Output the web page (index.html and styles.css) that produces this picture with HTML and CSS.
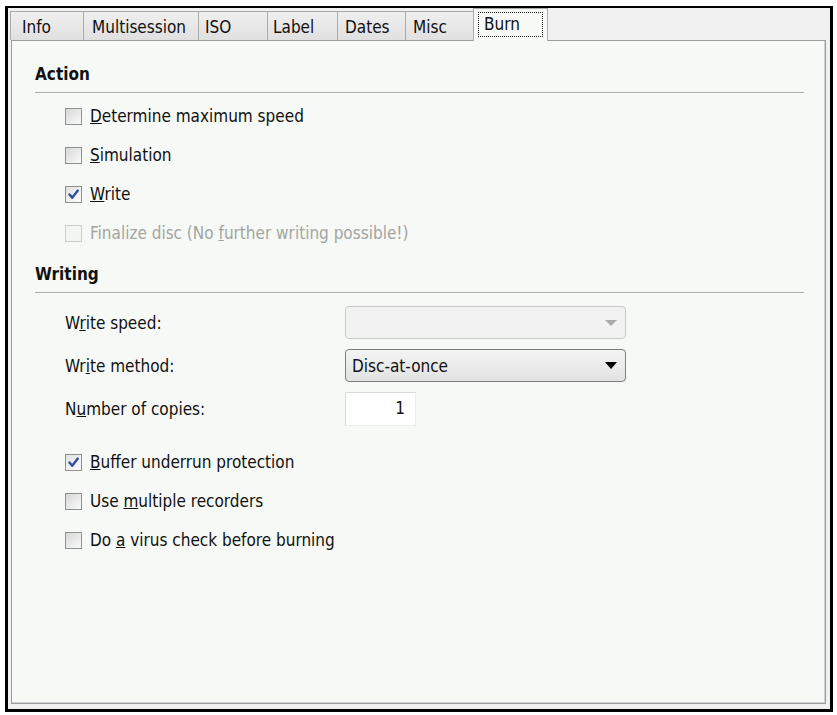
FILE: index.html
```html
<!DOCTYPE html>
<html>
<head>
<meta charset="utf-8">
<link rel="stylesheet" href="styles.css">
</head>
<body>
<div class="window">
  <div class="tabs">
    <div class="tab tab-info">Info</div>
    <div class="tab tab-multi">Multisession</div>
    <div class="tab tab-iso">ISO</div>
    <div class="tab tab-label">Label</div>
    <div class="tab tab-dates">Dates</div>
    <div class="tab tab-misc">Misc</div>
    <div class="tab tab-active"><span class="focus">Burn</span></div>
  </div>
  <div class="panel">
    <section class="group">
      <h2 class="group-title">Action</h2>
      <div class="rule"></div>
      <div class="checks checks-action">
        <div class="check"><span class="box"></span><span><u>D</u>etermine maximum speed</span></div>
        <div class="check"><span class="box"></span><span><u>S</u>imulation</span></div>
        <div class="check"><span class="box box-checked"><svg viewBox="0 0 17 17" width="17" height="17"><path d="M4.5 8.5 L7.2 11.8 L12.8 4.6" fill="none" stroke="#2f4f9e" stroke-width="2.4" stroke-linecap="round" stroke-linejoin="round"/></svg></span><span><u>W</u>rite</span></div>
        <div class="check check-disabled"><span class="box box-disabled"></span><span>Finalize disc (No <u>f</u>urther writing possible!)</span></div>
      </div>
    </section>
    <section class="group group-writing">
      <h2 class="group-title">Writing</h2>
      <div class="rule"></div>
      <div class="fields">
        <div class="field">
          <span class="field-label">W<u>r</u>ite speed:</span>
          <div class="combo combo-disabled"><span class="combo-text"></span><span class="arrow arrow-disabled"></span></div>
        </div>
        <div class="field">
          <span class="field-label">Wr<u>i</u>te method:</span>
          <div class="combo"><span class="combo-text">Disc-at-once</span><span class="arrow"></span></div>
        </div>
        <div class="field field-num">
          <span class="field-label">N<u>u</u>mber of copies:</span>
          <div class="numbox">1</div>
        </div>
      </div>
      <div class="checks checks-writing">
        <div class="check"><span class="box box-checked"><svg viewBox="0 0 17 17" width="17" height="17"><path d="M4.5 8.5 L7.2 11.8 L12.8 4.6" fill="none" stroke="#2f4f9e" stroke-width="2.4" stroke-linecap="round" stroke-linejoin="round"/></svg></span><span><u>B</u>uffer underrun protection</span></div>
        <div class="check"><span class="box"></span><span>Use <u>m</u>ultiple recorders</span></div>
        <div class="check"><span class="box"></span><span>Do <u>a</u> virus check before burning</span></div>
      </div>
    </section>
  </div>
</div>
</body>
</html>
```

FILE: styles.css
```css
html, body {
  margin: 0;
  padding: 0;
  background: #ffffff;
}

body {
  font-family: "DejaVu Sans Condensed", "DejaVu Sans", sans-serif;
  font-size: 17px;
  color: #111111;
}

.window {
  box-sizing: border-box;
  width: 828px;
  height: 706px;
  margin: 6px 0 0 5px;
  border: 3px solid #000000;
  border-top-width: 2px;
  background: #f0f0f0;
  padding: 0 4px 5px 3px;
  display: flex;
  flex-direction: column;
}

.tabs {
  height: 32px;
  display: flex;
  align-items: flex-end;
  margin-left: -1px;
  position: relative;
  z-index: 1;
}

.tab {
  box-sizing: border-box;
  height: 29px;
  padding-left: 8px;
  padding-top: 2px;
  line-height: 27px;
  border: 1px solid #a9acab;
  border-left: none;
  border-bottom: none;
  background: linear-gradient(#efefef, #e0e0e0);
  white-space: nowrap;
}

.tab-info { width: 74px; border-left: 1px solid #a9acab; padding-left: 11px; }
.tab-multi { width: 115px; }
.tab-iso { width: 69px; padding-left: 6px; }
.tab-label { width: 70px; padding-left: 5px; }
.tab-dates { width: 68px; padding-left: 7px; }
.tab-misc { width: 67px; padding-left: 7px; border-right: none; }

.tab-active {
  width: 75px;
  height: 33px;
  margin-bottom: -1px;
  border: 1px solid #a9acab;
  border-bottom: none;
  background: #f6f9f6;
  padding: 3px 4px 0 4px;
  line-height: normal;
}

.focus {
  display: block;
  box-sizing: border-box;
  height: 25px;
  border: 1px dotted #222222;
  padding-left: 5px;
  line-height: 22px;
}

.panel {
  flex: 1;
  box-sizing: border-box;
  border: 1px solid #9a9e9e;
  box-shadow: inset -1px -1px 0 #cdd0d0;
  background: #f6f9f6;
  padding: 23px 21px 0 23px;
}

.group-title {
  margin: 0;
  height: 20px;
  line-height: 20px;
  font-size: 17px;
  font-weight: bold;
  color: #111111;
}

.rule {
  margin-top: 8px;
  border-top: 1px solid #a8aca8;
  border-bottom: 1px solid #ffffff;
}

.group-writing {
  margin-top: 19px;
}

.checks {
  display: flex;
  flex-direction: column;
  gap: 15px;
  padding-left: 30px;
}

.checks-action { margin-top: 10px; }
.checks-writing { margin-top: 24px; }

.check {
  display: flex;
  align-items: center;
  gap: 8px;
  height: 24px;
  white-space: nowrap;
}

.check-disabled {
  color: #a3a5a3;
}

.box {
  box-sizing: border-box;
  width: 17px;
  height: 17px;
  border: 1px solid #8f9191;
  background: linear-gradient(135deg, #d6d7d7 0%, #ececec 60%, #fafafa 100%);
  display: flex;
  align-items: center;
  justify-content: center;
}

.box svg {
  display: block;
  margin: -1px;
}

.box-checked {
  background: linear-gradient(135deg, #dfe0e0 0%, #f2f2f2 60%, #fbfbfb 100%);
}

.box-disabled {
  border-color: #cbcdcd;
  background: #f3f5f3;
}

.fields {
  margin-top: 12px;
  padding-left: 30px;
  display: flex;
  flex-direction: column;
  gap: 10px;
}

.field {
  display: flex;
  align-items: center;
  height: 33px;
}

.field-num {
  height: 34px;
}

.field-label {
  width: 280px;
  flex: none;
}

.combo {
  box-sizing: border-box;
  width: 281px;
  height: 33px;
  border: 1px solid #7c7e7e;
  border-radius: 4px;
  background: linear-gradient(#f4f4f4, #e2e2e2);
  display: flex;
  align-items: center;
  padding: 0 8px 0 6px;
}

.combo-disabled {
  border-color: #c8caca;
  background: #f1f2f1;
}

.combo-text {
  flex: 1;
}

.arrow {
  width: 0;
  height: 0;
  border-left: 6px solid transparent;
  border-right: 6px solid transparent;
  border-top: 7px solid #000000;
}

.arrow-disabled {
  border-left-width: 6px;
  border-right-width: 6px;
  border-top: 6px solid #a9abab;
}

.numbox {
  box-sizing: border-box;
  width: 71px;
  height: 34px;
  border: 1px solid #d8dbdb;
  border-right-color: #eceeee;
  border-bottom-color: #eceeee;
  background: #ffffff;
  text-align: right;
  padding-right: 10px;
  line-height: 30px;
}
```
